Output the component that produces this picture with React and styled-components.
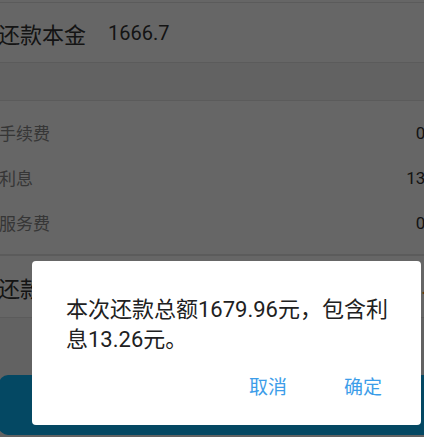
import styled, { createGlobalStyle } from 'styled-components';

const GlobalStyle = createGlobalStyle`
  html, body {
    margin: 0;
    padding: 0;
    overflow: hidden;
    background: #f5f5f5;
  }
  * {
    box-sizing: border-box;
  }
  body {
    font-family: Roboto, "Noto Sans CJK SC", sans-serif;
  }
`;

const Page = styled.div`
  width: 480px;
  height: 437px;
  margin-left: -16px;
  background: #f5f5f5;
`;

const TopStrip = styled.div`
  height: 2px;
  background: #fff;
`;

const Section = styled.section`
  background: #fff;
  border-top: 1px solid #e3e3e3;
  border-bottom: 1px solid #e3e3e3;
  padding: ${props => props.$padding || '0 15px'};
  margin-bottom: ${props => props.$gap || '0'};
`;

const MainRow = styled.div`
  display: flex;
  align-items: center;
  height: ${props => props.$height}px;
`;

const MainLabel = styled.span`
  font-size: 22px;
  color: #333;
  margin-left: -1px;
`;

const MainValue = styled.span`
  font-size: 20px;
  color: ${props => (props.$accent ? '#ff8d1a' : '#333')};
  margin-left: ${props => (props.$accent ? 'auto' : '22px')};
`;

const DetailRow = styled.div`
  display: flex;
  align-items: center;
  justify-content: space-between;
  height: 45px;
  font-size: 17px;
`;

const DetailLabel = styled.span`
  color: #888;
`;

const DetailValue = styled.span`
  color: #333;
`;

const ButtonArea = styled.div`
  padding: 57px 15px 0;
`;

const SubmitButton = styled.button`
  display: block;
  width: 100%;
  height: 60px;
  border: none;
  border-radius: 9px;
  background: #0ab4f8;
  color: #fff;
  font-family: inherit;
  font-size: 20px;
`;

const Overlay = styled.div`
  position: fixed;
  inset: 0;
  background: rgba(0, 0, 0, 0.6);
`;

const Dialog = styled.div`
  position: absolute;
  left: 32px;
  top: 261px;
  width: 389px;
  padding: 34px 24px 25px 34px;
  background: #fff;
  border-radius: 4px;
  display: flex;
  flex-direction: column;
`;

const Message = styled.p`
  margin: 0;
  font-size: 22px;
  line-height: 30px;
  color: #212121;
`;

const Actions = styled.div`
  display: flex;
  justify-content: flex-end;
  gap: 57px;
  margin-top: 21px;
  padding-right: 15px;
`;

const ActionButton = styled.button`
  border: none;
  background: none;
  padding: 0;
  font-family: inherit;
  font-size: 19px;
  line-height: 24px;
  color: #3c9de9;
`;

export default function App() {
  return (
    <>
      <GlobalStyle />
      <Page>
        <TopStrip />
        <Section $gap="37px">
          <MainRow $height={59}>
            <MainLabel>还款本金</MainLabel>
            <MainValue>1666.7</MainValue>
          </MainRow>
        </Section>
        <Section $padding="9px 15px 9px">
          <DetailRow>
            <DetailLabel>手续费</DetailLabel>
            <DetailValue>0.00</DetailValue>
          </DetailRow>
          <DetailRow>
            <DetailLabel>利息</DetailLabel>
            <DetailValue>13.26</DetailValue>
          </DetailRow>
          <DetailRow>
            <DetailLabel>服务费</DetailLabel>
            <DetailValue>0.00</DetailValue>
          </DetailRow>
        </Section>
        <Section>
          <MainRow $height={61}>
            <MainLabel>还款总额</MainLabel>
            <MainValue $accent>1679.96</MainValue>
          </MainRow>
        </Section>
        <ButtonArea>
          <SubmitButton>确认还款</SubmitButton>
        </ButtonArea>
      </Page>
      <Overlay>
        <Dialog>
          <Message>本次还款总额1679.96元，包含利息13.26元。</Message>
          <Actions>
            <ActionButton>取消</ActionButton>
            <ActionButton>确定</ActionButton>
          </Actions>
        </Dialog>
      </Overlay>
    </>
  );
}
